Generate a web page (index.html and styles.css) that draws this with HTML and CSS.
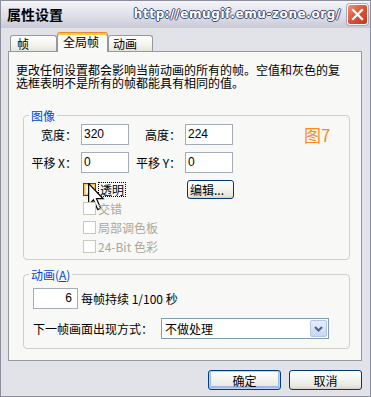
FILE: index.html
```html
<!DOCTYPE html>
<html lang="zh-CN">
<head>
    <meta charset="UTF-8">
    <title>属性设置</title>
    <link rel="stylesheet" href="styles.css">
</head>
<body>
    <div class="window">
        <div class="titlebar">
            <span class="title">属性设置</span>
            <span class="url">http://emugif.emu-zone.org/</span>
            <span class="close">
                <svg width="19" height="19" viewBox="0 0 19 19"><path d="M5 5 L14 14 M14 5 L5 14" stroke="#fff" stroke-width="2.2" stroke-linecap="square"/></svg>
            </span>
        </div>

        <div class="body">
            <div class="tabs">
                <div class="tab tab-1">帧</div>
                <div class="tab tab-2 active">全局帧</div>
                <div class="tab tab-3">动画</div>
            </div>

            <div class="panel">
                <p class="desc">
                    <span class="line">更改任何设置都会影响当前动画的所有的帧。空值和灰色的复</span>
                    <span class="line">选框表明不是所有的帧都能具有相同的值。</span>
                </p>

                <fieldset class="group image-group">
                    <legend>图像</legend>
                    <div class="fields">
                        <label>宽度：</label>
                        <div class="field">320</div>
                        <label>高度：</label>
                        <div class="field">224</div>
                        <span class="fig">图7</span>
                        <label>平移 X：</label>
                        <div class="field">0</div>
                        <label>平移 Y：</label>
                        <div class="field">0</div>
                    </div>

                    <div class="checks">
                        <div class="check-row">
                            <span class="check">
                                <span class="box hover"></span>
                                <span class="focus">透明</span>
                            </span>
                            <button class="btn small">编辑...</button>
                            <!-- mouse pointer over the checkbox -->
                            <svg class="pointer" width="17" height="29" viewBox="0 0 14 24">
                                <path d="M0.5 0.5 L0.5 18 L4.5 14 L8 22 L10.5 21 L7 13 L12.5 13 Z" fill="#fff" stroke="#000" stroke-width="1"/>
                            </svg>
                        </div>
                        <div class="check-row">
                            <span class="check disabled"><span class="box"></span><span>交错</span></span>
                        </div>
                        <div class="check-row">
                            <span class="check disabled"><span class="box"></span><span>局部调色板</span></span>
                        </div>
                        <div class="check-row">
                            <span class="check disabled"><span class="box"></span><span>24-Bit 色彩</span></span>
                        </div>
                    </div>
                </fieldset>

                <fieldset class="group anim-group">
                    <legend>动画(<u>A</u>)</legend>
                    <div class="row delay-row">
                        <div class="field num">6</div>
                        <span>每帧持续 1/100 秒</span>
                    </div>
                    <div class="row dispose-row">
                        <label>下一帧画面出现方式：</label>
                        <div class="select">
                            <span>不做处理</span>
                            <span class="arrow">
                                <svg width="9" height="6" viewBox="0 0 9 6"><path d="M1 1 L4.5 4.5 L8 1" fill="none" stroke="#4d6185" stroke-width="2"/></svg>
                            </span>
                        </div>
                    </div>
                </fieldset>
            </div>

            <div class="buttons">
                <button class="btn default">确定</button>
                <button class="btn">取消</button>
            </div>
        </div>
    </div>
</body>
</html>
```

FILE: styles.css
```css
* {
    box-sizing: border-box;
}
body {
    margin: 0;
    font-family: "Noto Sans CJK SC", sans-serif;
    font-size: 12px;
    line-height: 13px;
    color: #000;
    background-color: #fff;
}
.window {
    width: 371px;
    height: 397px;
    border: 1px solid #8d8e9c;
    background-color: #e2e2e9;
    display: flex;
    flex-direction: column;
}
.titlebar {
    height: 27px;
    display: flex;
    align-items: center;
    padding: 0 2px 0 6px;
    background: linear-gradient(#f4f4f8, #dedfe7 55%, #c8c9d5);
}
.title {
    font-weight: bold;
    font-size: 14px;
}
.url {
    margin-left: auto;
    font-family: "DejaVu Sans", sans-serif;
    font-weight: bold;
    font-size: 12px;
    letter-spacing: 0.6px;
    color: #fff;
    text-shadow: 1px 0 #3b4a72, -1px 0 #3b4a72, 0 1px #3b4a72, 0 -1px #3b4a72;
}
.close {
    width: 21px;
    height: 21px;
    margin-left: 6px;
    border: 1px solid #fff;
    border-radius: 3px;
    background: linear-gradient(135deg, #ec9580, #db5133 50%, #c23a1f);
    box-shadow: 0 0 0 1px #a9a9b8;
    display: flex;
    align-items: center;
    justify-content: center;
}
.body {
    flex: 1;
    padding: 4px 8px 6px 7px;
}
.tabs {
    display: flex;
    align-items: flex-end;
    height: 19px;
    padding-left: 2px;
    position: relative;
    z-index: 1;
}
.tab {
    height: 16px;
    border: 1px solid #919b9c;
    border-bottom: none;
    border-radius: 3px 3px 0 0;
    background: linear-gradient(#fff, #f4f3ee 60%, #e4e3dc);
    padding: 1px 0 0 6px;
}
.tab-1 {
    width: 47px;
}
.tab-2 {
    width: 51px;
    padding-left: 5px;
}
.tab-3 {
    width: 45px;
    padding-left: 4px;
}
.tab.active {
    height: 20px;
    margin-bottom: -1px;
    border-top: 1px solid #e68b2c;
    background: #fafaf9;
    box-shadow: inset 0 2px #ffc73c;
    padding-top: 2px;
}
.panel {
    height: 310px;
    border: 1px solid #919b9c;
    background-color: #f8f8f6;
    padding: 11px 0 0 7px;
}
.desc {
    margin: 0;
}
.desc .line {
    display: block;
    height: 13px;
}
.group {
    margin: 20px 0 0 7px;
    width: 327px;
    min-width: 0;
    padding: 0 0 3px;
    border: 1px solid #d0d0c8;
    border-radius: 4px;
}
.anim-group {
    margin-top: 8px;
}
.group legend {
    margin-left: 5px;
    padding: 0 2px;
    color: #0046d5;
    line-height: 13px;
}
.fields {
    display: grid;
    grid-template-columns: 57px 48px 56px 48px auto;
    row-gap: 7px;
    align-items: center;
    margin-top: 2px;
}
.fields label {
    text-align: right;
    padding-right: 4px;
}
.field {
    height: 21px;
    border: 1px solid #a5acb5;
    background-color: #fff;
    padding: 0 2px;
    font-family: "Liberation Sans", sans-serif;
    font-size: 12px;
    line-height: 19px;
}
.fig {
    margin-left: 71px;
    color: #ff8a1c;
    font-size: 17px;
    line-height: 17px;
}
.checks {
    padding-left: 59px;
    margin-top: 7px;
}
.check-row {
    display: flex;
    align-items: center;
    height: 19px;
    position: relative;
}
.check {
    display: flex;
    align-items: center;
    gap: 2px;
    width: 104px;
}
.box {
    width: 13px;
    height: 13px;
    border: 1px solid #1c5180;
    background: linear-gradient(135deg, #dcdcd7, #fff);
}
.box.hover {
    background: #fff;
    box-shadow: inset 0 0 0 1px #fbc25b, inset 0 0 0 2px #f8d98d;
}
.focus {
    border: 1px dotted #000;
    padding: 0 1px;
}
.check.disabled {
    color: #aca899;
}
.check.disabled .box {
    border-color: #cac8bb;
    background: #fff;
}
.pointer {
    position: absolute;
    left: 5px;
    top: 3px;
}
.btn {
    width: 73px;
    height: 20px;
    padding: 0;
    border: 1px solid #003c74;
    border-radius: 3px;
    background: linear-gradient(#fff, #f4f4f0 45%, #e8e7e0 85%, #d6d0c5);
    font-family: "Noto Sans CJK SC", sans-serif;
    font-size: 12px;
    line-height: 13px;
    color: #000;
}
.btn.small {
    width: 47px;
    height: 19px;
    text-align: left;
    padding-left: 2px;
}
.btn.default {
    box-shadow: inset 0 0 0 1px #bcd2f5, inset 0 -1px 0 2px #9eb8ec;
}
.row {
    display: flex;
    align-items: center;
    padding-left: 9px;
}
.delay-row {
    margin-top: 7px;
    gap: 3px;
}
.num {
    width: 45px;
    text-align: right;
    padding-right: 5px;
}
.dispose-row {
    margin-top: 9px;
    margin-bottom: 6px;
}
.dispose-row label {
    width: 128px;
}
.select {
    width: 168px;
    height: 21px;
    border: 1px solid #7f9db9;
    background-color: #fff;
    display: flex;
    align-items: center;
    padding: 0 1px 0 3px;
}
.arrow {
    margin-left: auto;
    width: 17px;
    height: 17px;
    border: 1px solid #b4c4e4;
    border-radius: 2px;
    background: linear-gradient(#e6eefc, #c7d6f5);
    display: flex;
    align-items: center;
    justify-content: center;
}
.buttons {
    display: flex;
    justify-content: flex-end;
    gap: 8px;
    margin-top: 9px;
}
```
